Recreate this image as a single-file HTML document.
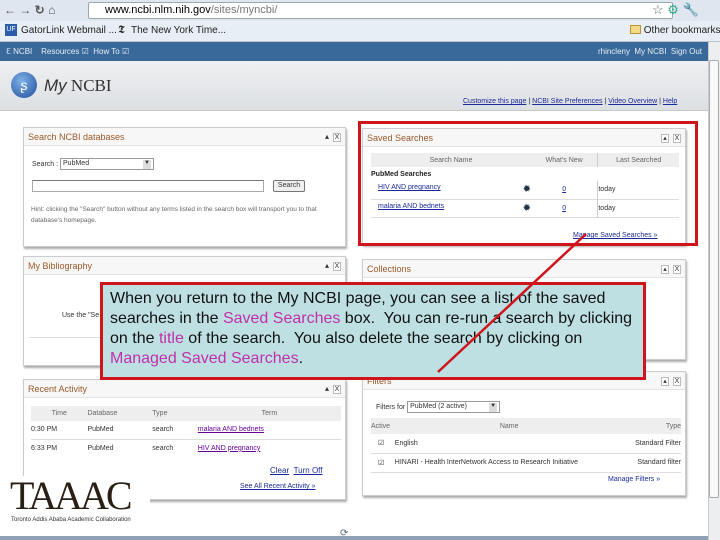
<!DOCTYPE html>
<html><head><meta charset="utf-8"><style>
*{margin:0;padding:0;box-sizing:border-box}
body{width:720px;height:540px;overflow:hidden;position:relative;background:#fff;font-family:"Liberation Sans",sans-serif;font-size:8px;color:#333}
.abs{position:absolute;white-space:nowrap}
.panel{position:absolute;background:#fff;border:1px solid #c9cdd2;box-shadow:1px 2px 2px #aaa}
.ph{height:18px;border-bottom:1px solid #e3e3e3;background:#f7f7f7;color:#9a5a2a;font-size:9px;padding:4px 4px}
.ctl{position:absolute;top:4px;right:4px;font-size:8px;color:#333}
.ctl span{display:inline-block;width:8px;height:9px;border:1px solid #bbb;text-align:center;line-height:7px;margin-left:4px;font-size:7px;background:#fff}
a{color:#1a2a9a;text-decoration:underline}
table{border-collapse:collapse;font-size:7px}
.m{color:#c030a8}
</style></head><body>
<div class="abs" style="left:0;top:0;width:720px;height:21px;background:#dfe6ef"></div>
<div class="abs" style="left:4px;top:3px;font-size:12px;color:#555">← → <b>↻</b> ⌂</div>
<div class="abs" style="left:88px;top:2px;width:585px;height:17px;background:#fff;border:1px solid #9aa;border-radius:2px;font-size:11px;padding:1px 16px;color:#000">www.ncbi.nlm.nih.gov<span style="color:#777">/sites/myncbi/</span></div>
<div class="abs" style="left:652px;top:2px;font-size:13px;color:#666">☆ <span style="color:#3a8">⚙</span> <span style="color:#444">🔧</span></div>
<div class="abs" style="left:0;top:21px;width:720px;height:21px;background:#e8eef5;border-bottom:1px solid #b9c3cf"></div>
<div class="abs" style="left:5px;top:24px;width:12px;height:12px;background:#2a5ca8;color:#fff;font-size:7px;text-align:center;line-height:12px">UF</div>
<div class="abs" style="left:21px;top:25px;font-size:10px;color:#222">GatorLink Webmail ...</div>
<div class="abs" style="left:118px;top:24px;font-size:11px;color:#222;font-family:'Liberation Serif',serif">𝕿</div>
<div class="abs" style="left:131px;top:25px;font-size:10px;color:#222">The New York Time...</div>
<div class="abs" style="left:630px;top:25px;font-size:10px;color:#222"><span style="display:inline-block;width:11px;height:9px;background:#f2d98a;border:1px solid #b9953a;vertical-align:-1px"></span> Other bookmarks</div>
<div class="abs" style="left:0;top:42px;width:708px;height:19px;background:#39699a;color:#e8eef5;font-size:8px;padding:5px 6px">ℇ NCBI &nbsp;&nbsp; Resources ☑ &nbsp;How To ☑<span style="position:absolute;right:6px;top:5px">rhincleny &nbsp;My NCBI &nbsp;Sign Out</span></div>
<div class="abs" style="left:0;top:61px;width:708px;height:50px;background:linear-gradient(#eef0f2,#dde0e3);border-bottom:1px solid #c8c8c8"></div>
<div class="abs" style="left:11px;top:72px;width:26px;height:26px;border-radius:50%;background:radial-gradient(circle at 40% 35%,#7fb0e8,#1f4f9a);color:#fff;font-size:14px;text-align:center;line-height:26px">ʂ</div>
<div class="abs" style="left:44px;top:76px;font-size:17px;color:#333;font-family:'Liberation Serif',serif"><i style="font-family:'Liberation Sans'">My</i> NCBI</div>
<div class="abs" style="left:463px;top:98px;font-size:7px;color:#223"><a>Customize this page</a> | <a>NCBI Site Preferences</a> | <a>Video Overview</a> | <a>Help</a></div>
<div class="abs" style="left:708px;top:42px;width:12px;height:498px;background:#eceef0;border-left:1px solid #ccc"></div>
<div class="abs" style="left:709px;top:60px;width:10px;height:438px;background:#f8f8f8;border:1px solid #aaa;border-radius:2px"></div>
<div class="abs" style="left:0;top:536px;width:708px;height:4px;background:#8fa2b5"></div>

<div class="panel" style="left:23px;top:127px;width:323px;height:120px">
<div class="ph">Search NCBI databases<div class="ctl">▴<span>X</span></div></div>
<div class="abs" style="left:8px;top:30px;font-size:7px">Search : <span style="display:inline-block;width:94px;height:12px;border:1px solid #999;vertical-align:middle;padding:1px 2px">PubMed<span style="float:right;background:#ddd;width:8px;height:9px;font-size:6px;text-align:center">▼</span></span></div>
<div class="abs" style="left:8px;top:52px;width:232px;height:12px;border:1px solid #aaa;border-top-color:#777"></div>
<div class="abs" style="left:249px;top:52px;width:32px;height:12px;border:1px solid #777;background:#f0f0f0;font-size:7px;text-align:center;line-height:10px;border-radius:2px">Search</div>
<div class="abs" style="left:7px;top:76px;font-size:6.5px;line-height:11px;color:#666;width:310px;white-space:normal">Hint: clicking the "Search" button without any terms listed in the search box will transport you to that database's homepage.</div>
</div>
<div class="panel" style="left:23px;top:256px;width:323px;height:110px">
<div class="ph">My Bibliography<div class="ctl">▴<span>X</span></div></div>
<div class="abs" style="left:38px;top:55px;font-size:7px">Use the "Se</div>
<div class="abs" style="left:5px;top:80px;width:312px;border-top:1px solid #ddd"></div>
</div>
<div class="panel" style="left:23px;top:379px;width:323px;height:121px">
<div class="ph">Recent Activity<div class="ctl">▴<span>X</span></div></div>
<table class="abs" style="left:7px;top:26px;width:310px">
<tr style="background:#eee;height:15px;color:#666"><td style="text-align:center">Time</td><td>Database</td><td>Type</td><td style="text-align:center">Term</td></tr>
<tr style="height:18px;border-bottom:1px solid #ddd"><td>0:30 PM</td><td>PubMed</td><td>search</td><td><a style="color:#609">malaria AND bednets</a></td></tr>
<tr style="height:18px"><td>6:33 PM</td><td>PubMed</td><td>search</td><td><a style="color:#609">HIV AND pregnancy</a></td></tr>
</table>
<div class="abs" style="left:246px;top:86px;font-size:8px"><a>Clear</a> &nbsp;<a>Turn Off</a></div>
<div class="abs" style="left:216px;top:103px;font-size:7px"><a>See All Recent Activity »</a></div>
</div>

<div class="panel" style="left:362px;top:128px;width:324px;height:117px">
<div class="ph">Saved Searches<div class="ctl"><span>▴</span><span>X</span></div></div>
<table class="abs" style="left:8px;top:24px;width:308px">
<tr style="background:#eee;height:14px;color:#666"><td style="text-align:center;width:160px">Search Name</td><td style="text-align:center">What's New</td><td style="text-align:center;border-left:1px solid #ccc">Last Searched</td></tr>
<tr style="height:14px"><td colspan="3" style="font-weight:bold;color:#222">PubMed Searches</td></tr>
<tr style="height:18px;border-bottom:1px solid #ddd"><td style="padding-left:7px"><a>HIV AND pregnancy</a><span style="float:right;font-size:10px;color:#234">✹</span></td><td style="text-align:center"><a>0</a></td><td style="border-left:1px solid #ccc">today</td></tr>
<tr style="height:18px;border-bottom:1px solid #ddd"><td style="padding-left:7px"><a>malaria AND bednets</a><span style="float:right;font-size:10px;color:#234">✹</span></td><td style="text-align:center"><a>0</a></td><td style="border-left:1px solid #ccc">today</td></tr>
</table>
<div class="abs" style="left:210px;top:103px;font-size:7px"><a>Manage Saved Searches »</a></div>
</div>
<div class="abs" style="left:358px;top:121px;width:340px;height:125px;border:3px solid #d0141c"></div>
<div class="panel" style="left:362px;top:259px;width:324px;height:101px">
<div class="ph">Collections<div class="ctl"><span>▴</span><span>X</span></div></div>
</div>
<div class="panel" style="left:362px;top:371px;width:324px;height:125px">
<div class="ph">Filters<div class="ctl"><span>▴</span><span>X</span></div></div>
<div class="abs" style="left:13px;top:29px;font-size:7px">Filters for <span style="display:inline-block;width:93px;height:12px;border:1px solid #999;vertical-align:middle;padding:1px 2px">PubMed (2 active)<span style="float:right;background:#ddd;width:8px;height:9px;font-size:6px;text-align:center">▼</span></span></div>
<table class="abs" style="left:8px;top:46px;width:310px">
<tr style="background:#eee;height:16px;color:#666"><td>Active</td><td style="text-align:center">Name</td><td style="text-align:right">Type</td></tr>
<tr style="height:19px;border-bottom:1px solid #ddd"><td style="padding-left:7px">☑</td><td>English</td><td style="text-align:right">Standard Filter</td></tr>
<tr style="height:19px;border-bottom:1px solid #ddd"><td style="padding-left:7px">☑</td><td>HINARI - Health InterNetwork Access to Research Initiative</td><td style="text-align:right">Standard filter</td></tr>
</table>
<div class="abs" style="left:245px;top:104px;font-size:7px;color:#1a2a9a">Manage Filters »</div>
</div>

<div class="abs" style="left:100px;top:282px;width:546px;height:98px;background:#bfe0e3;border:3px solid #d0141c;font-size:16px;line-height:20px;color:#111;padding:4px 7px;letter-spacing:0px">When you return to the My NCBI page, you can see a list of the saved<br>searches in the <span class="m">Saved Searches</span> box.&nbsp; You can re-run a search by clicking<br>on the <span class="m">title</span> of the search.&nbsp; You also delete the search by clicking on<br><span class="m">Managed Saved Searches</span>.</div>
<svg class="abs" style="left:0;top:0" width="720" height="540"><line x1="586" y1="234" x2="438" y2="372" stroke="#d0141c" stroke-width="2.5"/></svg>

<div class="abs" style="left:0;top:476px;width:150px;height:52px;background:#fff"></div>
<div class="abs" style="left:10px;top:474px;font-size:40px;font-family:'Liberation Serif',serif;color:#2a1f14;letter-spacing:-3px;line-height:44px">TAAAC</div>
<div class="abs" style="left:11px;top:517px;font-size:6px;color:#333">Toronto Addis Ababa Academic Collaboration</div>
<div class="abs" style="left:340px;top:528px;font-size:10px;color:#567">⟳</div>
</body></html>
